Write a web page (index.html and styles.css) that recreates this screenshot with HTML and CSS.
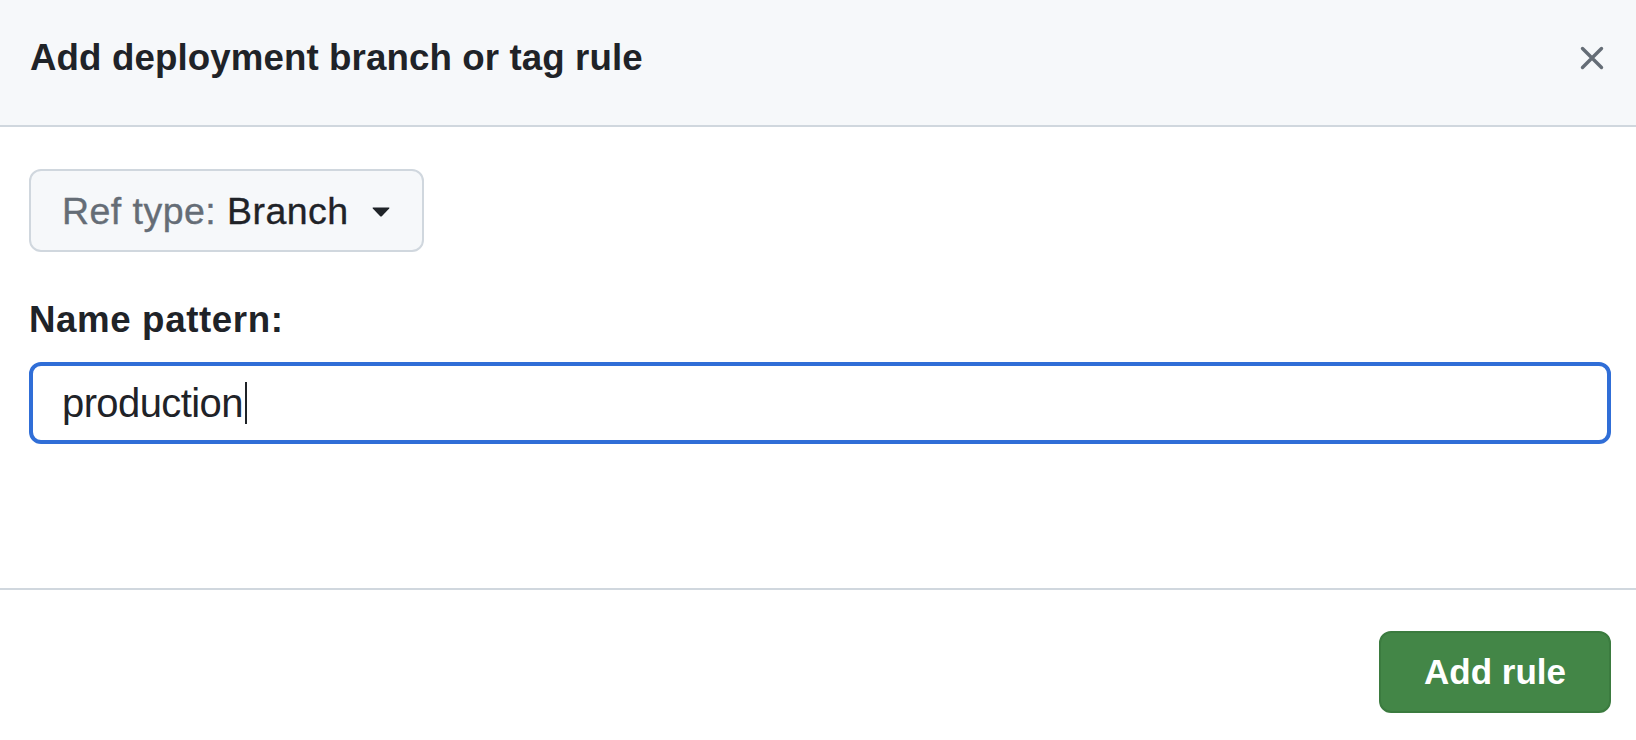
FILE: index.html
```html
<!DOCTYPE html>
<html lang="en">
<head>
<meta charset="utf-8">
<title>Add deployment branch or tag rule</title>
<link rel="stylesheet" href="styles.css">
</head>
<body>
<div class="dialog">
  <header class="header">
    <h1 class="title">Add deployment branch or tag rule</h1>
    <button class="close" aria-label="Close">
      <svg width="24" height="24" viewBox="0 0 24 24" aria-hidden="true">
        <path d="M2.5 2.5 L21.5 21.5 M21.5 2.5 L2.5 21.5" stroke="#656d76" stroke-width="3.4" stroke-linecap="round" fill="none"/>
      </svg>
    </button>
  </header>
  <div class="body">
    <button class="ref-btn">
      <span class="ref-text"><span class="muted">Ref type:</span> Branch</span>
      <svg class="caret" width="18" height="10" viewBox="0 0 18 10" aria-hidden="true">
        <path d="M1.2 0.5 H16.8 Q18 0.5 17.2 1.4 L9.8 9.2 Q9 10 8.2 9.2 L0.8 1.4 Q0 0.5 1.2 0.5 Z" fill="#1f2328"/>
      </svg>
    </button>
    <label class="label">Name pattern:</label>
    <div class="input"><span class="value">production</span><span class="cursor"></span></div>
  </div>
  <footer class="footer">
    <button class="primary">Add rule</button>
  </footer>
</div>
</body>
</html>
```
FILE: styles.css
```css
html, body {
  margin: 0;
  padding: 0;
  background: #ffffff;
}

body {
  font-family: "Liberation Sans", Arial, sans-serif;
  color: #1f2328;
}

.dialog {
  width: 1636px;
  height: 740px;
  display: flex;
  flex-direction: column;
}

.header {
  box-sizing: border-box;
  height: 127px;
  background: #f6f8fa;
  border-bottom: 2px solid #d0d7de;
  display: flex;
  align-items: center;
  justify-content: space-between;
  padding: 0 32px 9px 30px;
}

.title {
  margin: 0;
  font-size: 36.7px;
  font-weight: 700;
  letter-spacing: 0.1px;
  line-height: 44px;
  color: #1f2328;
}

.close {
  background: none;
  border: 0;
  padding: 0;
  width: 24px;
  height: 24px;
  display: flex;
  cursor: pointer;
}

.body {
  box-sizing: border-box;
  height: 461px;
  padding: 42px 25px 0 29px;
  display: flex;
  flex-direction: column;
  align-items: flex-start;
}

.ref-btn {
  box-sizing: border-box;
  width: 395px;
  height: 83px;
  border: 2px solid #d0d7de;
  border-radius: 12px;
  background: #f6f8fa;
  display: flex;
  align-items: center;
  justify-content: space-between;
  padding: 0 32px 0 31px;
  font-family: "Liberation Sans", Arial, sans-serif;
  font-size: 37.5px;
  letter-spacing: 0.45px;
  -webkit-text-stroke: 0.35px currentColor;
  color: #1f2328;
  cursor: pointer;
}

.ref-text {
  line-height: 44px;
}

.muted {
  color: #656d76;
}

.caret {
  display: block;
  margin-top: 2px;
}

.label {
  margin-top: 46px;
  font-size: 36.7px;
  font-weight: 700;
  letter-spacing: 0.6px;
  line-height: 44px;
  color: #1f2328;
}

.input {
  box-sizing: border-box;
  margin-top: 20px;
  width: 100%;
  height: 82px;
  border: 4px solid #306ed7;
  border-radius: 12px;
  background: #ffffff;
  display: flex;
  align-items: center;
  padding-left: 29px;
  font-size: 40px;
  letter-spacing: -0.6px;
  line-height: 40px;
  color: #1f2328;
}

.cursor {
  display: inline-block;
  width: 2px;
  height: 42px;
  background: #1f2328;
  margin-left: 2px;
}

.footer {
  flex: 1;
  border-top: 2px solid #d0d7de;
  display: flex;
  justify-content: flex-end;
  align-items: flex-start;
  padding: 41px 25px 0 0;
}

.primary {
  box-sizing: border-box;
  width: 232px;
  height: 82px;
  border: 2px solid #3b7b3f;
  border-radius: 12px;
  background: #438647;
  color: #ffffff;
  font-family: "Liberation Sans", Arial, sans-serif;
  font-size: 35px;
  font-weight: 700;
  cursor: pointer;
}
```
